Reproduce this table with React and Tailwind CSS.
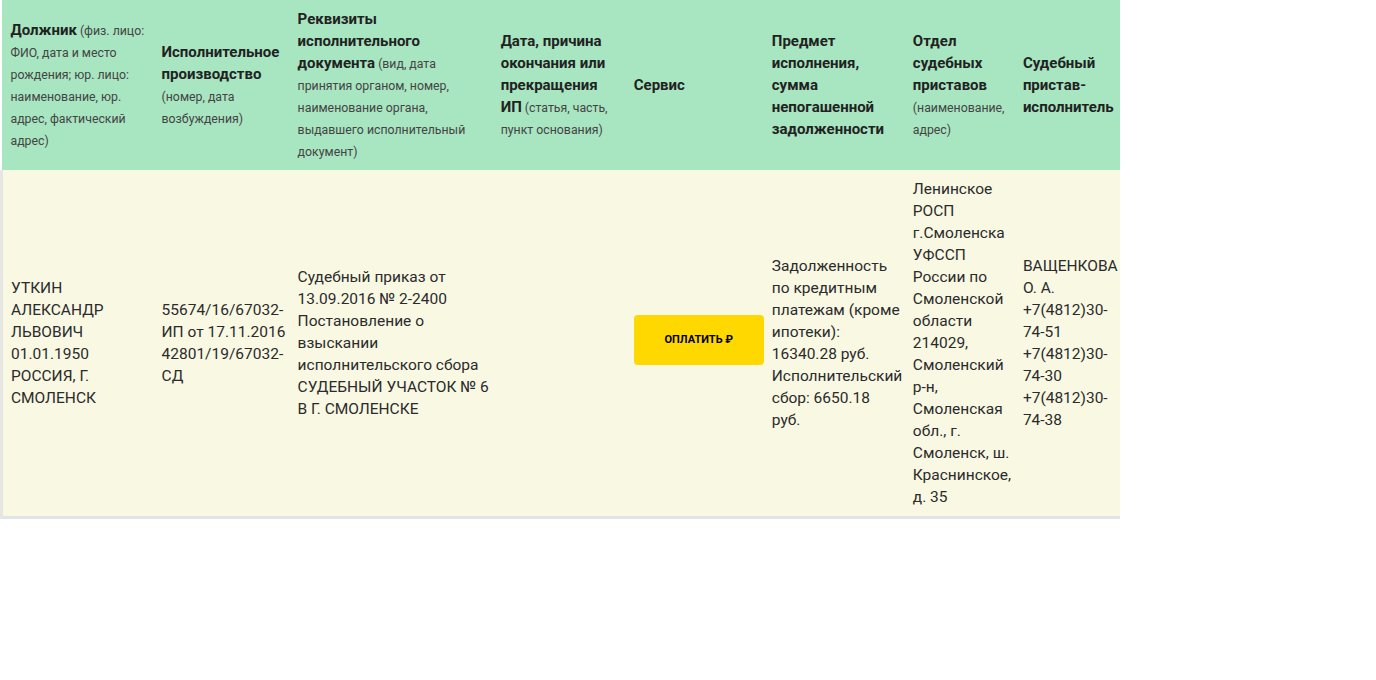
import React from 'react';

const headers = [
  { w: 'w-[152px]', title: 'Должник', note: ' (физ. лицо: ФИО, дата и место рождения; юр. лицо: наименование, юр. адрес, фактический адрес)' },
  { w: 'w-[136px]', title: 'Исполнительное производство', note: ' (номер, дата возбуждения)' },
  { w: 'w-[203px]', title: 'Реквизиты исполнительного документа', note: ' (вид, дата принятия органом, номер, наименование органа, выдавшего исполнительный документ)' },
  { w: 'w-[133px]', title: 'Дата, причина окончания или прекращения ИП', note: ' (статья, часть, пункт основания)' },
  { w: 'w-[138px]', title: 'Сервис', note: '' },
  { w: 'w-[141px]', title: 'Предмет исполнения, сумма непогашенной задолженности', note: '' },
  { w: 'w-[110px]', title: 'Отдел судебных приставов', note: ' (наименование, адрес)' },
  { w: 'w-[130px]', title: 'Судебный пристав-исполнитель', note: '' },
];

const row = [
  ['УТКИН', 'АЛЕКСАНДР', 'ЛЬВОВИЧ', '01.01.1950', 'РОССИЯ, Г.', 'СМОЛЕНСК'],
  ['55674/16/67032-', 'ИП от 17.11.2016', '42801/19/67032-', 'СД'],
  ['Судебный приказ от', '13.09.2016 № 2-2400', 'Постановление о', 'взыскании', 'исполнительского сбора', 'СУДЕБНЫЙ УЧАСТОК № 6', 'В Г. СМОЛЕНСКЕ'],
  [],
  null,
  ['Задолженность', 'по кредитным', 'платежам (кроме', 'ипотеки):', '16340.28 руб.', 'Исполнительский', 'сбор: 6650.18', 'руб.'],
  ['Ленинское', 'РОСП', 'г.Смоленска', 'УФССП', 'России по', 'Смоленской', 'области', '214029,', 'Смоленский', 'р-н,', 'Смоленская', 'обл., г.', 'Смоленск, ш.', 'Краснинское,', 'д. 35'],
  ['ВАЩЕНКОВА', 'О. А.', '+7(4812)30-', '74-51', '+7(4812)30-', '74-30', '+7(4812)30-', '74-38'],
];

export default function App() {
  return (
    <div className="w-[1120px] overflow-hidden bg-white" style={{ fontFamily: 'Roboto, "Noto Sans", sans-serif' }}>
      <table className="table-fixed border-collapse w-[1145px] text-[#2b2b2b]">
        <thead>
          <tr className="bg-[#a8e5c1]">
            {headers.map((h, i) => (
              <th key={i} className={`${h.w} px-2 py-2 text-left align-middle font-normal text-[15px] leading-[22px] ${i === 0 ? 'pl-[9px]' : ''}`}>
                <span className="font-bold text-[15px] text-[#222]">{h.title}</span>
                {h.note && <span className="text-[12.3px] leading-[18px] text-[#444]">{h.note}</span>}
              </th>
            ))}
          </tr>
        </thead>
        <tbody>
          <tr className="bg-[#f8f8e3] border-b-[3px] border-[#e2e4e6]">
            {row.map((lines, i) => (
              <td key={i} className={`px-2 py-2 align-middle text-[15.5px] leading-[22px] text-[#2b2b2b] ${i === 0 ? 'border-l-[3px] border-[#e6e7e4] pl-2' : ''}`}>
                {lines === null ? (
                  <button className="block mb-[6px] w-[130px] h-[50px] rounded-[4px] bg-[#ffd800] text-[11px] font-bold text-black">
                    ОПЛАТИТЬ ₽
                  </button>
                ) : (
                  lines.map((l, j) => <div key={j} className="whitespace-nowrap">{l}</div>)
                )}
              </td>
            ))}
          </tr>
        </tbody>
      </table>
    </div>
  );
}
